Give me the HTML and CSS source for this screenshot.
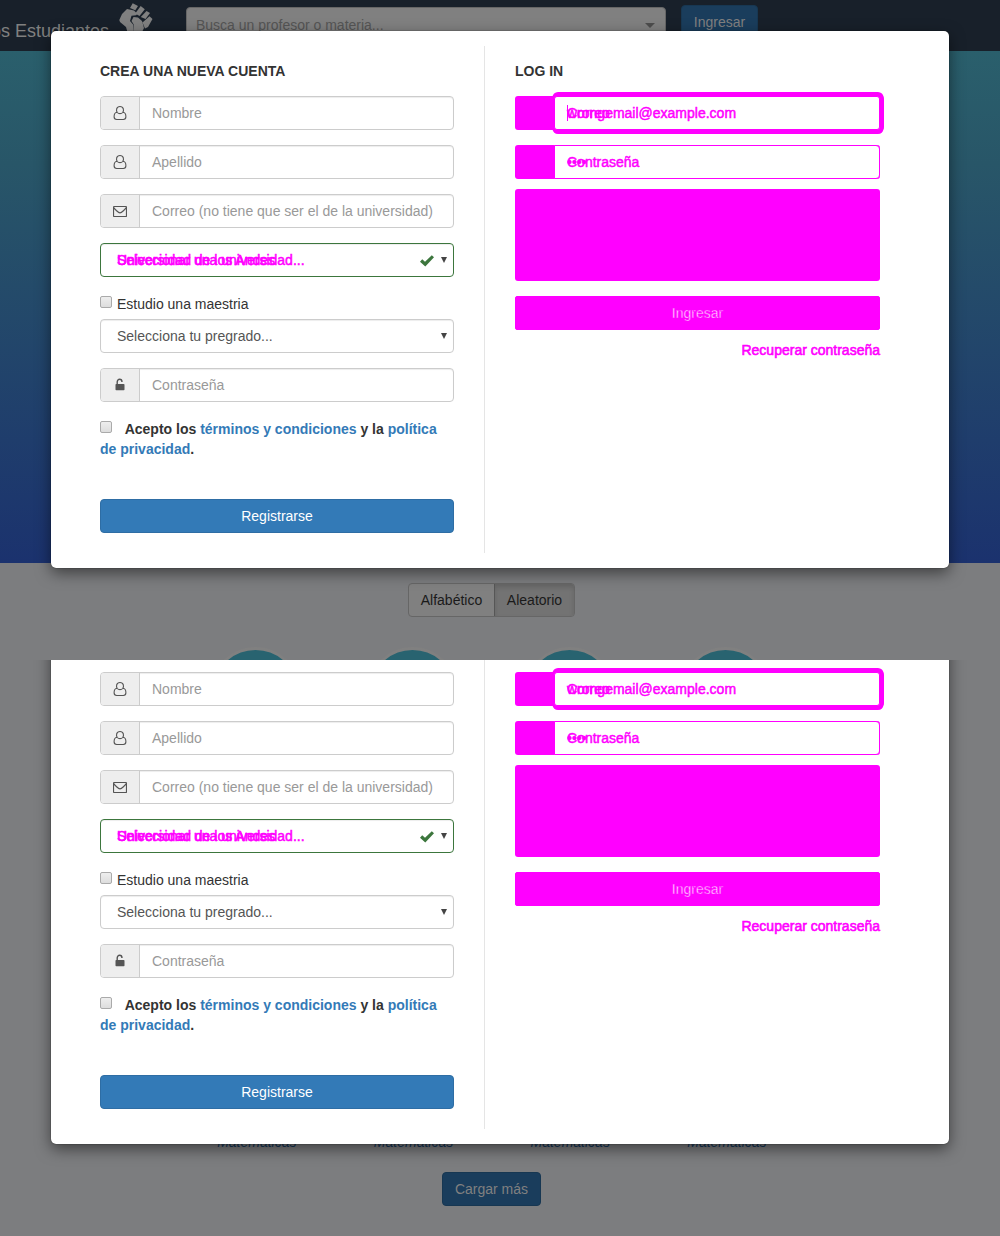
FILE: index.html
```html
<!DOCTYPE html>
<html lang="es">
<head>
<meta charset="utf-8">
<title>Los Estudiantes</title>
<link rel="stylesheet" href="styles.css">
</head>
<body>
<svg width="0" height="0" class="defs">
  <symbol id="user" viewBox="0 0 14 16"><path d="M4.300 7.500C2.900 5.500 3.200 1.500 7 1.500s4.100 4 2.700 6C8.500 9 5.500 9 4.300 7.500ZM4 7.300C1.800 7.500 1.100 9.700 1.100 11.800c0 1.800 1 2.700 2.600 2.700h6.600c1.600 0 2.600-.9 2.600-2.700 0-2.100-.7-4.300-2.900-4.500" fill="none" stroke="#555" stroke-width="1.100"/></symbol>
  <symbol id="mail" viewBox="0 0 14 16"><path d="M1.200 3.500h11.600q.7 0 .7.700v8.600q0 .7-.7.700H1.200q-.7 0-.7-.7V4.200q0-.7.700-.7ZM.7 4.500C1.500 6 5.500 9.800 7 9.800s5.500-3.800 6.300-5.300" fill="none" stroke="#555" stroke-width="1.200"/></symbol>
  <symbol id="lock" viewBox="0 0 14 16"><path d="M4.200 8V5C4.200 1.300 9 1.300 9 5" fill="none" stroke="#555" stroke-width="1.400"/><rect x="2.500" y="7" width="9" height="6.200" rx=".8" fill="#555"/></symbol>
  <symbol id="check" viewBox="0 0 14 12"><path d="M0 6.800 2.200 4.300 5 6.800 11.800.3 14 2.300 5.300 11.600Z" fill="#3c763d"/></symbol>
</svg>

<section class="frame first">
  <header class="navbar">
    <span class="brand">os Estudiantes</span>
    <svg class="fist" viewBox="0 0 34 34"><path fill="#808080" d="M13.700.3 19 3 16.300 7.300 11 5ZM21.700 3 25.800 6.300 20.500 13 16.200 10.500ZM27.500 8 31 10 26.500 16 21.800 14ZM30.500 13.300 33.500 16 29 24 26 25.500 23.500 19.500ZM.3 17 3 11 8 6 15 7.500 18.500 11 17 12.200 12.500 12.800 11 18 14.500 22 15 31H9L7 24 1 19ZM14.500 14 19 14.500 23 18 25 25 22 31H15V22L12.500 18Z"/></svg>
    <div class="search"><span>Busca un profesor o materia...</span><i class="caret"></i></div>
    <a class="btn dim enter">Ingresar</a>
  </header>
  <div class="hero"></div>
  <div class="sort"><span>Alfabético</span><span class="active">Aleatorio</span></div>
  <div class="people"><i></i><i></i><i></i><i></i></div>
  <div class="modal">
    <div class="signup">
      <h2>CREA UNA NUEVA CUENTA</h2>
      <div class="field"><b><svg class="ico"><use href="#user"/></svg></b><span>Nombre</span></div>
      <div class="field"><b><svg class="ico"><use href="#user"/></svg></b><span>Apellido</span></div>
      <div class="field"><b><svg class="ico"><use href="#mail"/></svg></b><span>Correo (no tiene que ser el de la universidad)</span></div>
      <div class="select valid"><div class="stack"><span>Seleccionar una universidad...</span><span>Universidad de los Andes</span></div><svg class="check"><use href="#check"/></svg><i class="arrow"></i></div>
      <div class="master"><i class="box"></i><span>Estudio una maestria</span></div>
      <div class="select"><span class="value">Selecciona tu pregrado...</span><i class="arrow"></i></div>
      <div class="field"><b><svg class="ico"><use href="#lock"/></svg></b><span>Contraseña</span></div>
      <p class="terms"><i class="box"></i>Acepto los <a>términos y condiciones</a> y la <a>política de privacidad</a>.</p>
      <a class="btn">Registrarse</a>
    </div>
    <div class="login">
      <h2>LOG IN</h2>
      <div class="diff focus"><div class="stack"><span>Correo</span><span>wrongemail@example.com</span><i class="cursor"></i></div></div>
      <div class="diff"><div class="stack"><span>Contraseña</span><span>••••</span></div></div>
      <div class="block"></div>
      <a class="btn changed">Ingresar</a>
      <a class="recover">Recuperar contraseña</a>
    </div>
  </div>
</section>

<section class="frame second">
  <div class="subjects"><span>Matemáticas</span><span>Matemáticas</span><span>Matemáticas</span><span>Matemáticas</span></div>
  <a class="btn dim more">Cargar más</a>
  <div class="modal">
    <div class="signup">
      <h2>CREA UNA NUEVA CUENTA</h2>
      <div class="field"><b><svg class="ico"><use href="#user"/></svg></b><span>Nombre</span></div>
      <div class="field"><b><svg class="ico"><use href="#user"/></svg></b><span>Apellido</span></div>
      <div class="field"><b><svg class="ico"><use href="#mail"/></svg></b><span>Correo (no tiene que ser el de la universidad)</span></div>
      <div class="select valid"><div class="stack"><span>Seleccionar una universidad...</span><span>Universidad de los Andes</span></div><svg class="check"><use href="#check"/></svg><i class="arrow"></i></div>
      <div class="master"><i class="box"></i><span>Estudio una maestria</span></div>
      <div class="select"><span class="value">Selecciona tu pregrado...</span><i class="arrow"></i></div>
      <div class="field"><b><svg class="ico"><use href="#lock"/></svg></b><span>Contraseña</span></div>
      <p class="terms"><i class="box"></i>Acepto los <a>términos y condiciones</a> y la <a>política de privacidad</a>.</p>
      <a class="btn">Registrarse</a>
    </div>
    <div class="login">
      <h2>LOG IN</h2>
      <div class="diff focus"><div class="stack"><span>Correo</span><span>wrongemail@example.com</span></div></div>
      <div class="diff"><div class="stack"><span>Contraseña</span><span>••••</span></div></div>
      <div class="block"></div>
      <a class="btn changed">Ingresar</a>
      <a class="recover">Recuperar contraseña</a>
    </div>
  </div>
</section>
</body>
</html>
```
FILE: styles.css
```css
* { box-sizing: border-box; }
body { margin: 0; font: 14px/20px "Liberation Sans", Arial, sans-serif; color: #333; }
.defs { display: none; }
.frame { position: relative; overflow: hidden; background: #7c7d7f; width: 1000px; }
.first { height: 660px; }
.second { height: 576px; padding-top: 472px; }

.navbar { height: 51px; background: #18202a; display: flex; align-items: flex-start; color: #808080; }
.brand { width: 109px; display: flex; justify-content: flex-end; white-space: nowrap; font-size: 18px; padding-top: 21px; }
.fist { width: 34px; height: 34px; margin: 3px 33px 0 10px; flex: none; }
.search { width: 480px; height: 36px; margin-top: 7px; padding: 0 10px 0 9px; background: #808080; border: 1px solid #666; border-radius: 4px; color: #555; display: flex; align-items: center; justify-content: space-between; }
.caret { border: 5px solid transparent; border-top-color: #4d4d4d; border-bottom: 0; }
.btn { display: flex; align-items: center; justify-content: center; height: 34px; border: 1px solid #2e6da4; border-radius: 4px; background: #337ab7; color: #fff; }
.btn.dim { background: #1a3d5c; border-color: #173752; color: #808080; }
.enter { width: 77px; margin: 5px 0 0 15px; }
.hero { height: 512px; background: linear-gradient(#2a5f6c, #285668 22%, #1b326e); }
.sort { display: flex; width: 167px; height: 34px; margin: 20px 0 0 408px; border: 1px solid #666; border-radius: 4px; background: #808080; color: #1a1a1a; line-height: 32px; overflow: hidden; }
.sort span { flex: none; width: 85px; text-align: center; }
.sort .active { width: 80px; background: #737373; border-left: 1px solid #565656; box-shadow: inset 0 3px 5px rgba(0,0,0,.125); }
.people { display: grid; grid-template-columns: repeat(4, 156.7px); margin: 30px 0 0 177.500px; }
.people i { width: 91px; height: 91px; margin: 0 auto; border-radius: 50%; border: 3px solid #808080; background: #286370; }
.subjects { display: grid; grid-template-columns: repeat(4, 156.7px); margin-left: 178.500px; text-align: center; font-style: italic; color: #18395a; height: 40px; }
.more { width: 99px; margin-left: 442px; }

.modal { position: absolute; left: 51px; top: 31px; width: 898px; height: 537px; padding: 15px 69px 15px 49px; display: grid; grid-template-columns: 385px 395px; background: #fff; border-radius: 5px; box-shadow: 0 5px 15px rgba(0,0,0,.5), 0 0 1px #000; }
.second .modal { top: -53px; }
.signup { padding-right: 30px; border-right: 1px solid #e5e5e5; }
.login { padding-left: 30px; }
h2 { margin: 15px 0; font-size: 14px; line-height: 20px; }
.field { display: flex; height: 34px; margin-bottom: 15px; border: 1px solid #ccc; border-radius: 4px; color: #999; box-shadow: inset 0 1px 1px rgba(0,0,0,.075); }
.field b { width: 39px; background: #eee; border-right: 1px solid #ccc; border-radius: 3px 0 0 3px; display: flex; align-items: center; justify-content: center; }
.field span { padding: 6px 12px; }
.ico { width: 14px; height: 16px; }
.select { display: flex; align-items: center; height: 34px; margin-bottom: 15px; padding: 0 6px 0 16px; border: 1px solid #ccc; border-radius: 4px; color: #555; box-shadow: inset 0 1px 1px rgba(0,0,0,.075); }
.value { flex: 1; }
.valid { border-color: #3c763d; }
.valid .stack { flex: 1; }
.stack { display: grid; color: #f0f; -webkit-text-stroke: .5px #f0f; }
.stack span, .cursor { grid-area: 1 / 1; }
.cursor { width: 1px; height: 16px; margin-top: 2px; background: #f0f; }
.check { width: 14px; height: 12px; margin: 2px 7px 0 0; }
.arrow { border: 3px solid transparent; border-top: 6px solid #444; border-bottom: 0; }
.box { display: inline-block; width: 12px; height: 12px; border: 1px solid #aaa; border-radius: 2px; background: linear-gradient(#eee, #ddd); }
.master { display: flex; gap: 5px; height: 27px; padding-top: 2px; }
.master .box { margin-top: 2px; }
.terms { margin: 17px 0 40px; font-weight: bold; }
.terms .box { margin-right: 12.700px; vertical-align: 1px; }
.terms a { color: #337ab7; }
.diff { height: 34px; margin-bottom: 15px; padding-left: 39px; background: #f0f; border-radius: 3px; }
.diff .stack { height: 34px; padding: 6px 12px; border: 1px solid #f0f; border-radius: 0 4px 4px 0; background: #fff; }
.focus .stack { box-shadow: 1.500px 0 0 2.500px #f0f, 1px 1.500px 0 2.500px #f0f, 1px -1.500px 0 2.500px #f0f; border-radius: 3px; }
.diff + .block { margin-top: -5px; }
.block { height: 92px; margin-bottom: 15px; border-radius: 3px; background: #f0f; }
.changed { background: #f0f; border-color: #f0f; border-radius: 2px; -webkit-text-stroke: .5px #f0f; }
.recover { display: block; margin-top: 10px; text-align: right; color: #f0f; -webkit-text-stroke: .6px #f0f; }
```
